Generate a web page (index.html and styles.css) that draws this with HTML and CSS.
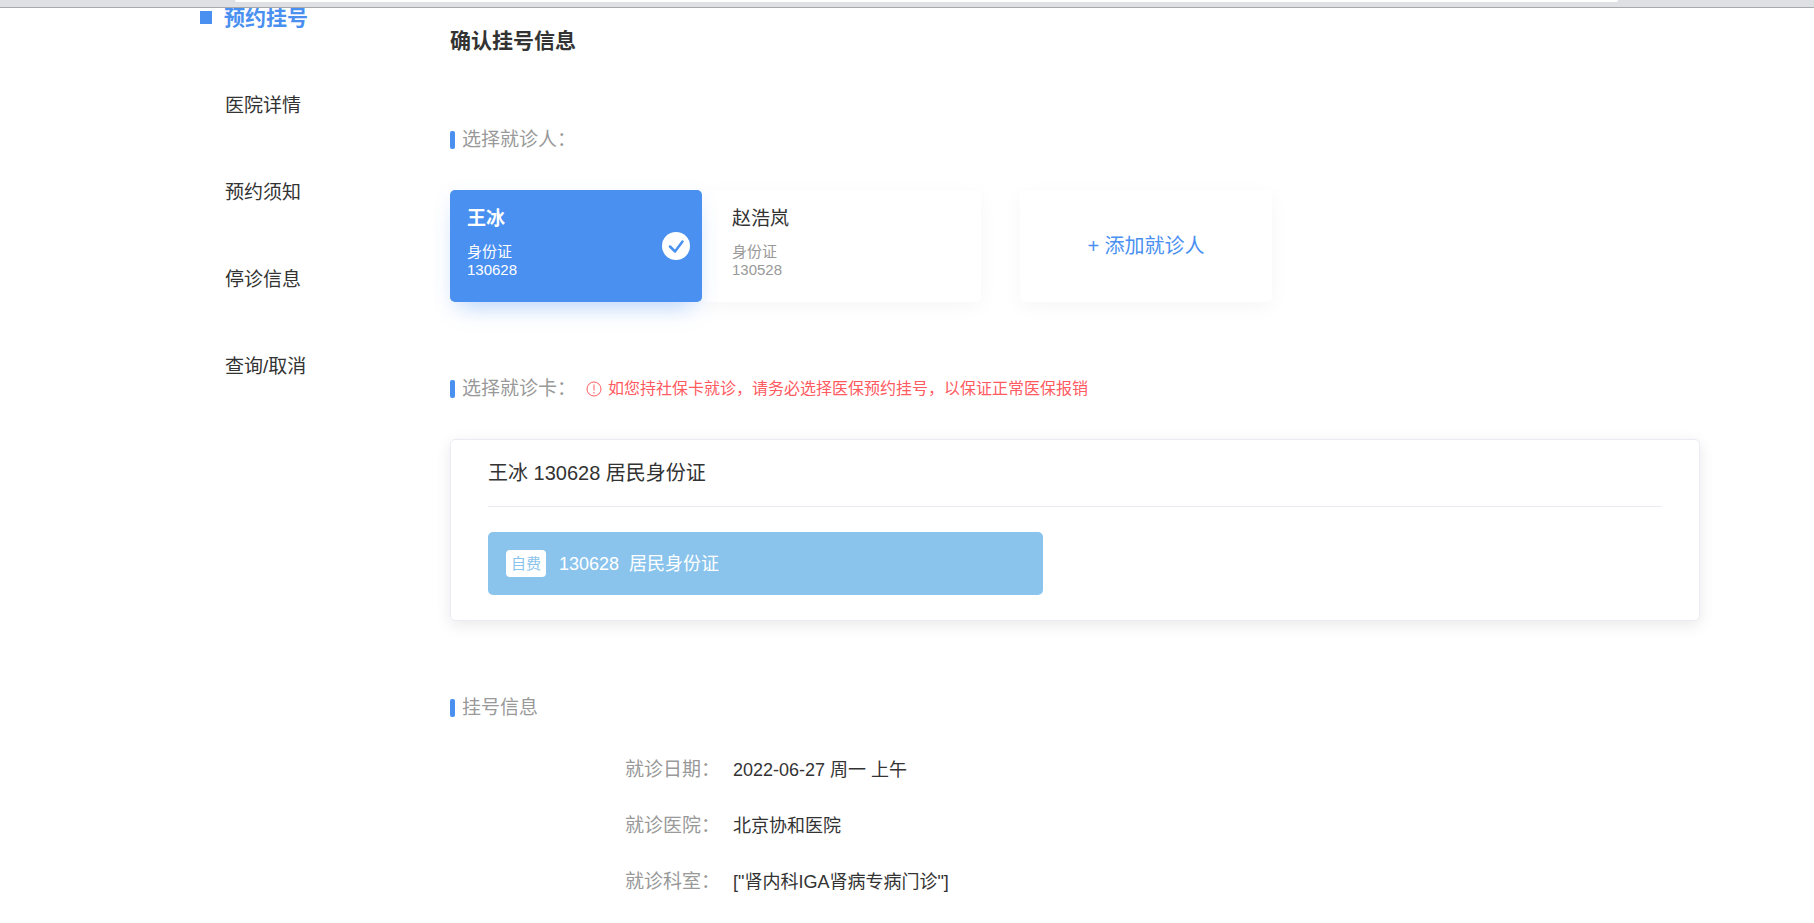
FILE: index.html
```html
<!DOCTYPE html>
<html lang="zh-CN">
  <head>
    <meta charset="UTF-8" />
    <meta name="viewport" content="width=device-width, initial-scale=1.0" />
    <title>预约挂号</title>
    <link rel="stylesheet" href="styles.css">
  </head>
  <body>
    <div class="topbar">
      <div class="topbar-field"></div>
    </div>

    <div class="page">
      <nav class="nav">
        <a href="#" class="nav-item active">预约挂号</a>
        <a href="#" class="nav-item">医院详情</a>
        <a href="#" class="nav-item">预约须知</a>
        <a href="#" class="nav-item">停诊信息</a>
        <a href="#" class="nav-item">查询/取消</a>
      </nav>

      <main class="content">
        <h1 class="title">确认挂号信息</h1>

        <h2 class="sub-title">选择就诊人：</h2>
        <div class="patients">
          <button type="button" class="patient selected">
            <span class="detail">
              <span class="name">王冰</span>
              <span class="cert">身份证</span>
              <span class="cert">130628</span>
            </span>
            <svg class="check" viewBox="0 0 28 28">
              <circle cx="14" cy="14" r="14" fill="#fff" />
              <path d="M8 14.5l5 5 7.5-10" fill="none" stroke="#4990f1" stroke-width="2.5" stroke-linecap="round" stroke-linejoin="round" />
            </svg>
          </button>
          <button type="button" class="patient other">
            <span class="detail">
              <span class="name">赵浩岚</span>
              <span class="cert">身份证</span>
              <span class="cert">130528</span>
            </span>
          </button>
          <button type="button" class="patient add">+ 添加就诊人</button>
        </div>

        <div class="sub-row">
          <h2 class="sub-title">选择就诊卡：</h2>
          <p class="tips">
            <svg class="tips-icon" viewBox="0 0 16 16">
              <circle cx="8" cy="8" r="7" fill="none" stroke="#ff5a5f" />
              <path d="M8 3.5v6M8 11v1.5" fill="none" stroke="#ff5a5f" />
            </svg>
            如您持社保卡就诊，请务必选择医保预约挂号，以保证正常医保报销
          </p>
        </div>
        <div class="card">
          <div class="card-title">王冰 130628 居民身份证</div>
          <button type="button" class="card-item">
            <span class="tag">自费</span>
            <span class="card-no">130628</span>
            <span>居民身份证</span>
          </button>
        </div>

        <h2 class="sub-title">挂号信息</h2>
        <dl class="info">
          <div class="info-row">
            <dt>就诊日期：</dt>
            <dd>2022-06-27 周一 上午</dd>
          </div>
          <div class="info-row">
            <dt>就诊医院：</dt>
            <dd>北京协和医院</dd>
          </div>
          <div class="info-row">
            <dt>就诊科室：</dt>
            <dd>["肾内科IGA肾病专病门诊"]</dd>
          </div>
        </dl>
      </main>
    </div>
  </body>
</html>
```
FILE: styles.css
```css
* {
  box-sizing: border-box;
}
body {
  margin: 0;
  background: #fff;
  color: #333;
  font-family: "Liberation Sans", "Noto Sans CJK SC", sans-serif;
  font-size: 19px;
  line-height: 24px;
}
button {
  font: inherit;
  color: inherit;
  text-align: left;
  border: none;
  cursor: pointer;
}
h1,
h2,
p,
dl,
dd {
  margin: 0;
}

.topbar {
  position: relative;
  z-index: 1;
  height: 8px;
  padding: 0 196px 0 235px;
  background: #dee0e4;
  border-bottom: 1px solid #a9a9ab;
}
.topbar-field {
  height: 2px;
  background: #fff;
  border-radius: 0 0 4px 4px;
}

.page {
  display: flex;
  padding: 0 114px 29px 200px;
}

/* Side menu */
.nav {
  display: flex;
  flex-direction: column;
  gap: 63px;
  width: 250px;
  flex-shrink: 0;
  margin-top: -4px;
}
.nav-item {
  display: flex;
  align-items: center;
  padding-left: 25px;
  color: #333;
  text-decoration: none;
}
.nav-item.active {
  padding-left: 0;
  color: #4990f1;
  font-size: 21px;
  font-weight: bold;
  line-height: 27px;
}
.nav-item.active::before {
  content: "";
  width: 12px;
  height: 13px;
  margin-right: 12px;
  background: #4990f1;
}

/* Content */
.content {
  flex: 1;
  min-width: 0;
  padding-top: 19px;
}
.title {
  margin-bottom: 73px;
  font-size: 21px;
  font-weight: bold;
  line-height: 28px;
}
.sub-title {
  display: flex;
  align-items: center;
  color: #999;
  font-size: 19px;
  font-weight: normal;
}
.sub-title::before {
  content: "";
  width: 5px;
  height: 18px;
  margin-right: 7px;
  border-radius: 2px;
  background: #4990f1;
}
.sub-row {
  display: flex;
  align-items: center;
}
.tips {
  display: flex;
  align-items: center;
  margin-left: 10px;
  color: #ff5a5f;
  font-size: 16px;
}
.tips-icon {
  width: 16px;
  height: 16px;
  margin-right: 6px;
}

/* Patients */
.patients {
  display: flex;
  margin: 38px 0 75px;
}
.patient {
  display: flex;
  justify-content: space-between;
  align-items: center;
  width: 252px;
  height: 112px;
  padding: 0 12px 0 17px;
  background: #fff;
  border-radius: 5px;
  box-shadow: 0 5px 20px rgba(0, 0, 0, 0.04);
}
.patient.selected {
  position: relative;
  z-index: 1;
  background: #4990f1;
  color: #fff;
  box-shadow: 0 14px 22px -10px rgba(73, 144, 241, 0.35),
    0 4px 20px rgba(73, 144, 241, 0.08);
}
.patient.other {
  width: 279px;
  padding-left: 30px;
}
.patient.add {
  justify-content: center;
  margin-left: 39px;
  padding: 0;
  color: #4990f1;
  font-size: 20px;
}
.detail {
  padding-bottom: 6px;
}
.name {
  display: block;
  margin-bottom: 12px;
}
.selected .name {
  font-weight: bold;
}
.cert {
  display: block;
  font-size: 15px;
  line-height: 18px;
}
.other .cert {
  color: #999;
}
.check {
  width: 28px;
  height: 28px;
}

/* Visit card */
.card {
  margin: 38px 0 75px;
  padding: 0 37px 25px;
  border: 1px solid #ebebf3;
  border-radius: 5px;
  box-shadow: 0 4px 16px rgba(0, 0, 0, 0.09);
}
.card-title {
  margin-bottom: 25px;
  border-bottom: 1px solid #ebebf3;
  font-size: 20px;
  line-height: 66px;
}
.card-item {
  display: flex;
  align-items: center;
  width: 100%;
  max-width: 555px;
  height: 63px;
  padding: 0 18px;
  border-radius: 5px;
  background: #8ac4ed;
  color: #fff;
  font-size: 18px;
}
.tag {
  width: 40px;
  margin-right: 13px;
  border-radius: 4px;
  background: #fff;
  color: #8ac4ed;
  font-size: 15px;
  line-height: 27px;
  text-align: center;
}
.card-no {
  margin-right: 10px;
}

/* Registration info */
.info {
  display: flex;
  flex-direction: column;
  gap: 32px;
  margin-top: 38px;
  padding-left: 14%;
}
.info-row {
  display: flex;
}
.info-row dt {
  margin-right: 13px;
  color: #999;
}
.info-row dd {
  font-size: 18px;
}
```
